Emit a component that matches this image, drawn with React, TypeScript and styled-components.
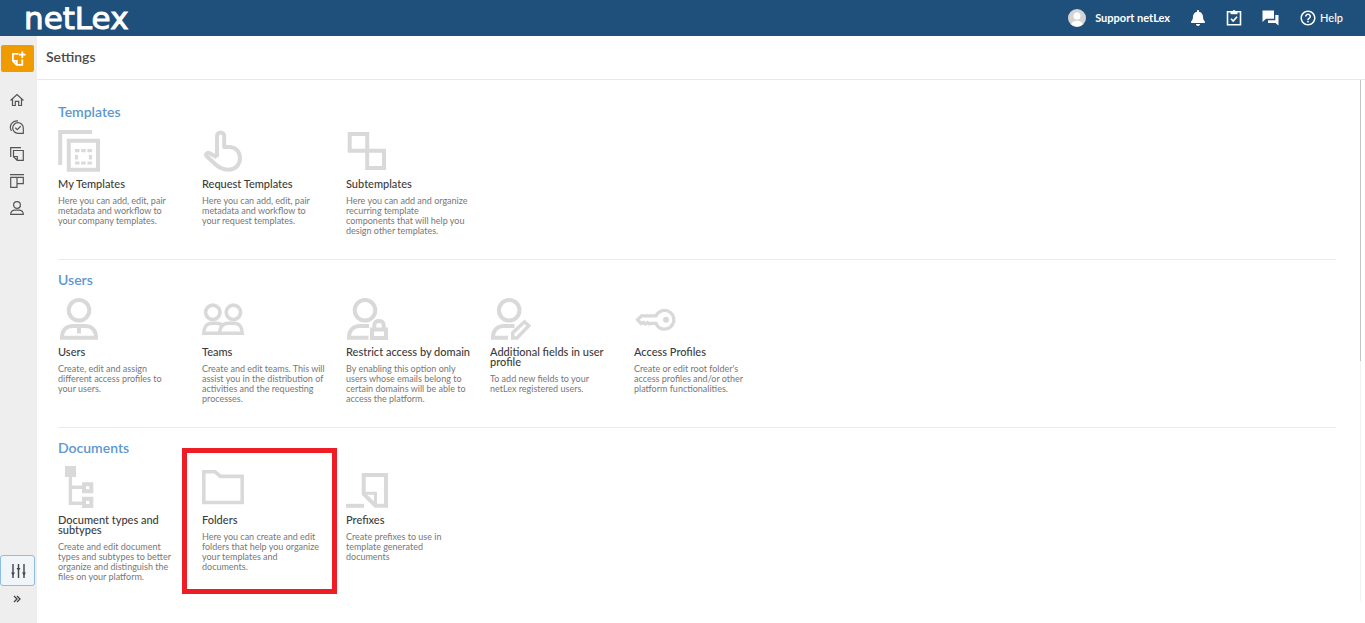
import React from "react";
import styled, { createGlobalStyle } from "styled-components";
import { FaBell } from "react-icons/fa";
import { MdHelpOutline } from "react-icons/md";

const GlobalStyle = createGlobalStyle`
  *, *::before, *::after { box-sizing: border-box; }
  body {
    margin: 0;
    background: #fff;
    color: #4a4a4a;
    font-family: Lato, "Liberation Sans", sans-serif;
  }
  h1, h2, h3, p { margin: 0; }
  a { color: inherit; text-decoration: none; }
  button { padding: 0; font: inherit; color: inherit; cursor: pointer; }
  svg { display: block; flex: none; }
`;

const Page = styled.div`
  display: flex;
  flex-direction: column;
  min-height: 100vh;
`;

const TopBar = styled.header`
  display: flex;
  align-items: center;
  justify-content: space-between;
  height: 36px;
  padding: 0 22px 0 24px;
  background: #1f4f7b;
  color: #fff;
`;

const Logo = styled.a`
  font-family: "DejaVu Sans", sans-serif;
  font-size: 31px;
  line-height: 36px;
  -webkit-text-stroke: 1px #fff;
`;

const TopActions = styled.div`
  display: flex;
  align-items: center;
  gap: 20px;
`;

const TopButton = styled.button<{ $bold?: boolean; $gap?: number }>`
  display: flex;
  align-items: center;
  gap: ${(p) => p.$gap ?? 0}px;
  border: 0;
  background: none;
  color: #fff;
  font-size: 11px;
  line-height: 16px;
  font-weight: ${(p) => (p.$bold ? 700 : 500)};
`;

const Body = styled.div`
  display: flex;
  flex: 1;
`;

const Sidebar = styled.nav`
  display: flex;
  flex-direction: column;
  align-items: flex-start;
  width: 37px;
  padding: 9px 0 14px;
  background: #eee;
  color: #555;
`;

const CreateButton = styled.button`
  display: flex;
  align-items: center;
  justify-content: center;
  width: 33px;
  height: 27px;
  margin: 0 0 14px 1px;
  border: 0;
  border-radius: 2px;
  background: #f09c00;
`;

const NavLink = styled.a`
  display: flex;
  align-items: center;
  justify-content: center;
  width: 34px;
  height: 27px;
`;

const SettingsButton = styled.button`
  display: flex;
  align-items: center;
  justify-content: center;
  width: 35px;
  height: 31px;
  margin-top: auto;
  border: 1px solid #8fbce6;
  border-radius: 3px;
  background: #f0f5fa;
`;

const ExpandButton = styled.button`
  display: flex;
  align-items: center;
  justify-content: center;
  width: 33px;
  height: 21px;
  margin-top: 2px;
  border: 0;
  background: none;
`;

const Main = styled.main`
  display: flex;
  flex: 1;
  flex-direction: column;
  min-width: 0;
`;

const PageTitle = styled.h1`
  height: 44px;
  padding: 0 9px;
  border-bottom: 1px solid #e8e8e8;
  font-size: 14px;
  font-weight: 600;
  line-height: 42px;
`;

const ScrollRow = styled.div`
  display: flex;
  padding-right: 4px;
`;

const Sections = styled.div`
  flex: 1;
  padding: 12px 24px 0 21px;
`;

const ScrollTrack = styled.div`
  width: 1px;
  margin-bottom: 4px;
  background: #f2f2f2;
`;

const ScrollThumb = styled.div`
  height: 54%;
  background: #c4c4c4;
`;

const Section = styled.section`
  padding: 12px 0 23px;
  border-bottom: 1px solid #ebebeb;

  &:last-child {
    border-bottom: 0;
  }
`;

const SectionTitle = styled.h2`
  margin-bottom: 10px;
  color: #5b97d0;
  font-size: 14px;
  font-weight: 600;
  line-height: 16px;
`;

const Cards = styled.div`
  display: flex;
  flex-wrap: wrap;
  gap: 18px;
`;

const Card = styled.a`
  position: relative;
  width: 126px;
`;

const CardTitle = styled.h3`
  margin: 7px 0;
  color: #3c3c3c;
  font-size: 11px;
  font-weight: 500;
  line-height: 10px;
`;

const CardText = styled.p`
  color: #777;
  font-size: 9px;
  line-height: 10px;
  white-space: pre-line;
`;

const Highlight = styled.span`
  position: absolute;
  inset: -18px -9px -12px -20px;
  border: 5px solid #ee1c24;
  pointer-events: none;
`;

const CardIcon: React.FC<{ children: React.ReactNode }> = ({ children }) => (
  <svg width="42" height="42" viewBox="0 0 42 42" fill="none" stroke="#d9d9d9" strokeWidth="4" aria-hidden="true">
    {children}
  </svg>
);

const NavIcon: React.FC<{ children: React.ReactNode }> = ({ children }) => (
  <svg width="16" height="16" viewBox="0 0 16 16" fill="none" stroke="#555" strokeWidth="1.2" aria-hidden="true">
    {children}
  </svg>
);

type CardData = { title: string; text: string; icon: React.ReactNode; highlighted?: boolean };

const sections: { title: string; cards: CardData[] }[] = [
  {
    title: "Templates",
    cards: [
      {
        title: "My Templates",
        text: "Here you can add, edit, pair\nmetadata and workflow to\nyour company templates.",
        icon: (
          <>
            <path d="M2.2 35V2H34" />
            <path d="M10.8 10.8H40V39.7H10.8Z" />
            <path
              d="M17 19h4.500v3.200H17zM23.200 19h4.500v3.200h-4.500zM29.400 19h4.500v3.200h-4.500zM17 25h3v4.500H17zM30.900 25h3v4.500h-3zM17 31.500h4.500v3H17zM23.200 31.500h4.500v3h-4.500zM29.400 31.500h4.500v3h-4.500z"
              fill="#d9d9d9"
              stroke="none"
            />
          </>
        ),
      },
      {
        title: "Request Templates",
        text: "Here you can add, edit, pair\nmetadata and workflow to\nyour request templates.",
        icon: (
          <path
            d="M15 27V6a3.6 3.6 0 0 1 7.2 0V17H27C33.5 17 38 21.5 38 28C38 35 33 39.7 26.500 39.7C20 39.700 16.500 37.500 12.500 33.500L5 26.500C3 24.500 5 22 7.500 23.200L15 27.200"
            strokeLinejoin="round"
          />
        ),
      },
      {
        title: "Subtemplates",
        text: "Here you can add and organize\nrecurring template\ncomponents that will help you\ndesign other templates.",
        icon: <path d="M3.7 4H21.2V20.700H3.700ZM21.200 20.700H38V38H21.200Z" />,
      },
    ],
  },
  {
    title: "Users",
    cards: [
      {
        title: "Users",
        text: "Create, edit and assign\ndifferent access profiles to\nyour users.",
        icon: (
          <>
            <circle cx="21" cy="12.300" r="10.300" />
            <path d="M4 39.800C4 32 8.500 28 15 28H27C33.500 28 38 32 38 39.800ZM21 28V35.500" />
          </>
        ),
      },
      {
        title: "Teams",
        text: "Create and edit teams. This will\nassist you in the distribution of\nactivities and the requesting\nprocesses.",
        icon: (
          <g strokeWidth="3.600">
            <circle cx="10.800" cy="14.300" r="7.200" />
            <circle cx="31.400" cy="14.300" r="7.200" />
            <path d="M17.700 35.200C17.700 29 21 25.300 26.500 25.300H32C37 25.300 40.200 29 40.200 35.200ZM17.700 35.200H1.800C1.800 29 5 25.300 10 25.300H14C17 25.300 19 26 20.500 27.500" />
          </g>
        ),
      },
      {
        title: "Restrict access by domain",
        text: "By enabling this option only\nusers whose emails belong to\ncertain domains will be able to\naccess the platform.",
        icon: (
          <>
            <circle cx="19" cy="12.300" r="10.300" />
            <path d="M23 28H14C7.500 28 3 32 3 39.800H22.500" />
            <path d="M26 31.500H40V40H26ZM28.300 31V27C28.300 21.500 37.700 21.500 37.700 27V31" />
          </>
        ),
      },
      {
        title: "Additional fields in user profile",
        text: "To add new fields to your\nnetLex registered users.",
        icon: (
          <>
            <circle cx="19.200" cy="12.300" r="10.300" />
            <path d="M24.500 28H14C7.500 28 3 32 3 39.800H18" />
            <path d="M22.700 40V34.700L34.500 23.700L38.800 27.700L27 40Z" strokeWidth="3.400" />
          </>
        ),
      },
      {
        title: "Access Profiles",
        text: "Create or edit root folder's\naccess profiles and/or other\nplatform functionalities.",
        icon: (
          <>
            <path
              d="M22 17.800H7.500L3.500 21.800L7 25.500L9.500 24.500L11.500 26L13.500 24.500L15.500 26L17.500 25.300H22C23.500 29 27 31.200 30.700 31.200A9.400 9.400 0 1 0 22 17.800Z"
              strokeWidth="3.300"
            />
            <circle cx="32" cy="21.800" r="3" fill="#d9d9d9" stroke="none" />
          </>
        ),
      },
    ],
  },
  {
    title: "Documents",
    cards: [
      {
        title: "Document types and subtypes",
        text: "Create and edit document\ntypes and subtypes to better\norganize and distinguish the\nfiles on your platform.",
        icon: (
          <>
            <path d="M7 0H18V11H7Z" fill="#d9d9d9" stroke="none" />
            <path d="M12.400 11V37.300H24M12.400 21.300H24" strokeWidth="3.400" />
            <path d="M26 18.200H33.300V25.200H26ZM26 32.800H33.300V40H26Z" />
          </>
        ),
      },
      {
        title: "Folders",
        text: "Here you can create and edit\nfolders that help you organize\nyour templates and\ndocuments.",
        icon: <path d="M1.800 5.800H13L18.500 10.400H40.200V36.500H1.800Z" strokeWidth="3.600" />,
        highlighted: true,
      },
      {
        title: "Prefixes",
        text: "Create prefixes to use in\ntemplate generated\ndocuments",
        icon: (
          <>
            <path d="M0 39.800H18" />
            <path d="M17.700 9H40V39.700H29.500L17.700 28Z" />
            <path d="M18 27.300H29.500V39.700" strokeWidth="3" />
          </>
        ),
      },
    ],
  },
];

export default function App() {
  return (
    <Page>
      <GlobalStyle />
      <TopBar>
        <Logo href="#" aria-label="netLex home">netLex</Logo>
        <TopActions>
          <TopButton $bold $gap={9}>
            <svg width="18" height="18" viewBox="0 0 18 18" aria-hidden="true">
              <circle cx="9" cy="9" r="9" fill="#d4d4d4" />
              <circle cx="9" cy="7" r="3.500" fill="#fff" />
              <path d="M3.500 15.500C3.500 10.500 14.500 10.500 14.500 15.500C11.500 18.200 6.500 18.200 3.500 15.500Z" fill="#fff" />
            </svg>
            Support netLex
          </TopButton>
          <TopButton aria-label="Notifications">
            <FaBell size={16} />
          </TopButton>
          <TopButton aria-label="Tasks">
            <svg width="16" height="16" viewBox="0 0 16 16" fill="none" stroke="#fff" strokeWidth="1.600" aria-hidden="true">
              <path d="M1.500 1.800H14.500V14.800H1.500Z" />
              <path d="M4.500 1H11.500V4.200H4.500Z" fill="#fff" stroke="none" />
              <circle cx="8" cy="1.500" r="1.500" fill="#fff" stroke="none" />
              <path d="M5 8.700L7.200 11L11 6.700" />
            </svg>
          </TopButton>
          <TopButton aria-label="Messages">
            <svg width="17" height="16" viewBox="0 0 17 16" fill="#fff" aria-hidden="true">
              <path d="M.5 .5H12V8.800H4L.5 12ZM13.300 5H16.500V15.500L13.500 13H6V10.200H13.300Z" />
            </svg>
          </TopButton>
          <TopButton $gap={3}>
            <MdHelpOutline size={18} />
            Help
          </TopButton>
        </TopActions>
      </TopBar>
      <Body>
        <Sidebar aria-label="Main">
          <CreateButton aria-label="New document">
            <svg width="16" height="16" viewBox="0 0 16 16" fill="none" stroke="#fff" strokeWidth="1.800" aria-hidden="true">
              <path d="M8.500 2.800H2.900V10L6.500 13.800H12.300V8.500M3 9.800H6.800V13.500M12.300 .5V7M9 3.700H15.500" />
            </svg>
          </CreateButton>
          <NavLink href="#" aria-label="Home">
            <NavIcon>
              <path d="M1.500 8.500L8 2.500L14.500 8.500M3.500 7V13.500H6.300V9.300H9.700V13.500H12.500V7" />
            </NavIcon>
          </NavLink>
          <NavLink href="#" aria-label="Approvals">
            <NavIcon>
              <path d="M14.300 14.300H9A5.300 5.300 0 1 1 14.300 9ZM6.300 8.800L8.300 10.600L11.700 7.300M2.500 12C-.5 7 3 1.500 9 1.800" />
            </NavIcon>
          </NavLink>
          <NavLink href="#" aria-label="Documents">
            <NavIcon>
              <path d="M1.700 11V1.700H12M4.500 4.500H14.300V14.300H8.200L4.500 10.700ZM4.500 10.500H8.300V14.300" />
            </NavIcon>
          </NavLink>
          <NavLink href="#" aria-label="Boards">
            <NavIcon>
              <path d="M1 1.700H15M1.700 4.300H8V14.300H1.700ZM8 4.300H14.300V10.700H8" />
            </NavIcon>
          </NavLink>
          <NavLink href="#" aria-label="Profile">
            <NavIcon>
              <circle cx="8" cy="5" r="3.400" />
              <path d="M1.700 14.300C1.700 11.500 3.500 10.200 6 10.200H10C12.500 10.200 14.300 11.500 14.300 14.300Z" />
            </NavIcon>
          </NavLink>
          <SettingsButton aria-label="Settings">
            <svg width="16" height="16" viewBox="0 0 16 16" fill="none" stroke="#444" strokeWidth="1.400" aria-hidden="true">
              <path d="M3 1V15M8.500 1V15M14 1V15" />
              <path d="M1 9.500H5L3 12.500ZM6.500 5H10.500L8.500 8ZM12 9.500H16L14 12.500Z" fill="#444" stroke="none" />
            </svg>
          </SettingsButton>
          <ExpandButton aria-label="Expand menu">
            <svg width="8" height="8" viewBox="0 0 8 8" fill="none" stroke="#444" strokeWidth="1.300" aria-hidden="true">
              <path d="M1 1L4 4L1 7M4 1L7 4L4 7" />
            </svg>
          </ExpandButton>
        </Sidebar>
        <Main>
          <PageTitle>Settings</PageTitle>
          <ScrollRow>
            <Sections>
              {sections.map((section) => (
                <Section key={section.title}>
                  <SectionTitle>{section.title}</SectionTitle>
                  <Cards>
                    {section.cards.map((card) => (
                      <Card href="#" key={card.title}>
                        <CardIcon>{card.icon}</CardIcon>
                        <CardTitle>{card.title}</CardTitle>
                        <CardText>{card.text}</CardText>
                        {card.highlighted && <Highlight />}
                      </Card>
                    ))}
                  </Cards>
                </Section>
              ))}
            </Sections>
            <ScrollTrack>
              <ScrollThumb />
            </ScrollTrack>
          </ScrollRow>
        </Main>
      </Body>
    </Page>
  );
}
